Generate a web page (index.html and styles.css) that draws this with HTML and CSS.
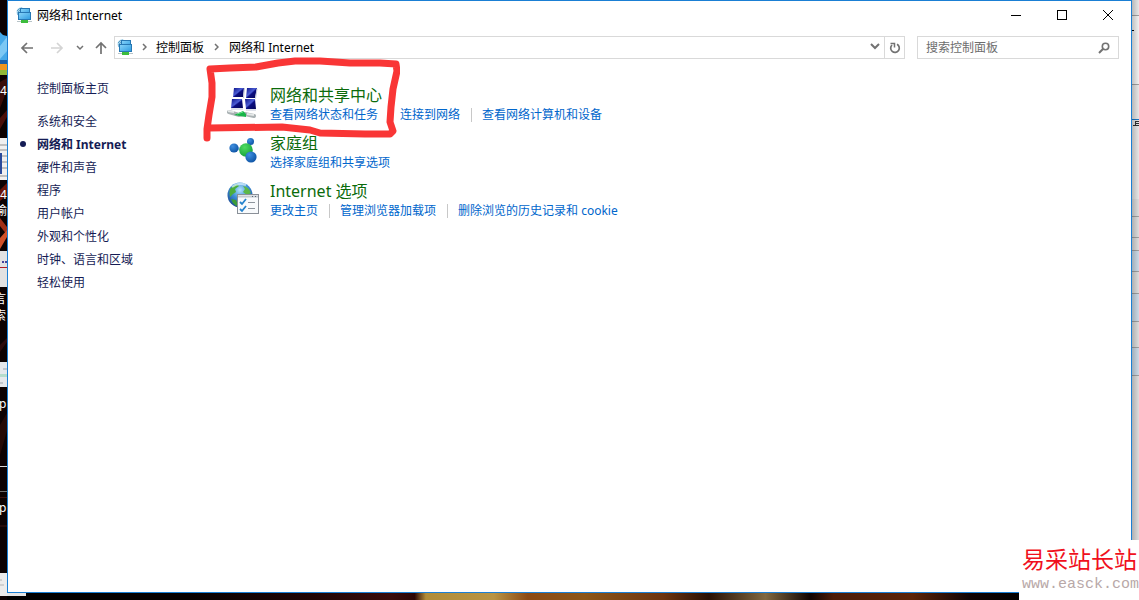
FILE: index.html
```html
<!DOCTYPE html>
<html lang="zh-CN">
<head>
    <meta charset="UTF-8">
    <meta name="viewport" content="width=device-width, initial-scale=1.0">
    <title>网络和 Internet</title>
    <link rel="stylesheet" href="styles.css">
</head>
<body>
    <svg width="0" height="0" class="defs" aria-hidden="true">
        <defs>
            <linearGradient id="screen" x1="0" y1="0" x2="1" y2="1">
                <stop offset="0" stop-color="#8bd6fa"/>
                <stop offset="1" stop-color="#2d9be0"/>
            </linearGradient>
            <linearGradient id="panel" x1="0" y1="0" x2="1" y2="1">
                <stop offset="0" stop-color="#0d1387"/>
                <stop offset="0.45" stop-color="#4a5cd4"/>
                <stop offset="0.55" stop-color="#0a0d80"/>
                <stop offset="1" stop-color="#040656"/>
            </linearGradient>
            <radialGradient id="blueBall" cx="0.35" cy="0.3" r="0.8">
                <stop offset="0" stop-color="#3f8fe0"/>
                <stop offset="1" stop-color="#0a4fa0"/>
            </radialGradient>
            <radialGradient id="greenBall" cx="0.4" cy="0.3" r="0.8">
                <stop offset="0" stop-color="#4fdc60"/>
                <stop offset="1" stop-color="#0f9c38"/>
            </radialGradient>
            <radialGradient id="globe" cx="0.5" cy="0.3" r="0.75">
                <stop offset="0" stop-color="#b4e4fb"/>
                <stop offset="0.45" stop-color="#3d8fd6"/>
                <stop offset="1" stop-color="#123a86"/>
            </radialGradient>
            <linearGradient id="shade" x1="0" y1="0" x2="1" y2="0">
                <stop offset="0" stop-color="#000" stop-opacity="0.2"/>
                <stop offset="1" stop-color="#000" stop-opacity="0"/>
            </linearGradient>
            <symbol id="net-icon" viewBox="0 0 16 16">
                <circle cx="5" cy="5" r="4.500" fill="#a9d8ef"/>
                <path d="M1 4q2-3 5-3M2 8q-1-3 2-5" fill="none" stroke="#5b9cc4"/>
                <rect x="4.500" y="1.500" width="9" height="7" fill="url(#screen)" stroke="#2778b4"/>
                <rect x="2.500" y="5.500" width="12" height="7" fill="url(#screen)" stroke="#2778b4"/>
                <path d="M1 14h15v1H1z" fill="#b8c4c8"/>
                <path d="M5 13h7v3H5z" fill="#3cbc3c"/>
            </symbol>
        </defs>
    </svg>

    <div class="desktop">
        <svg class="edge edge-left" viewBox="0 0 7 600" preserveAspectRatio="xMinYMin slice" aria-hidden="true">
            <rect width="7" height="600" fill="#0c0202"/>
            <path d="M0 32l3 3 4 1v25H0z" fill="#46a9e8"/>
            <path d="M0 46l7-9v14l-7 8z" fill="#7cc8f4"/>
            <rect y="60" width="7" height="4" fill="#1b5ea6"/>
            <rect y="64" width="7" height="6" fill="#f0951c"/>
            <rect y="70" width="7" height="5" fill="#8fb838"/>
            <path d="M0 82l7-4v12l-7 18z" fill="#3a0c08"/>
            <path d="M0 118l7-8v7l-7 12z" fill="#4a0f0a"/>
            <rect y="138" width="7" height="42" fill="#f0f0f0"/>
            <path d="M0 145h7M0 150h7M2 156h5M2 162h5M2 168h5M0 176h7" stroke="#8e8e8e"/>
            <rect y="153" width="2" height="21" fill="#2a4b9c"/>
            <path d="M0 190l7-7v12l-7 6z" fill="#6a1408"/>
            <path d="M0 218l7 9v8l-7-9z" fill="#a03018"/>
            <path d="M0 238l7-8v7l-7 12z" fill="#d05028"/>
            <rect y="251" width="7" height="36" fill="#e2e2e2"/>
            <path d="M2 262h2M5 262h2" stroke="#44449c" stroke-width="2"/>
            <path d="M0 267.500h7" stroke="#b01c24"/>
            <path d="M0 345l7-7v4l-7 10z" fill="#2c0a0a"/>
            <rect y="362" width="7" height="25" fill="#e4e8ec"/>
            <rect y="374" width="7" height="3" fill="#b4dccc"/>
            <path d="M3 369h4M0 383h3" stroke="#9aa4ac"/>
            <path d="M0 425l7-12v18l-7 24z" fill="#240a06"/>
            <path d="M0 466.500h7" stroke="#d8d8d8"/>
            <path d="M0 491.500h7" stroke="#707070"/>
            <path d="M0 497.500h7M0 526h7" stroke="#3c1410"/>
            <rect y="573" width="7" height="23" fill="#ececec"/>
            <path d="M0 580h2M0 585h4" stroke="#b4b4b4"/>
            <g class="edge-text">
                <text x="0" y="95">4</text>
                <text x="0" y="199">4</text>
                <text x="-5" y="215">瑜</text>
                <text x="-6" y="303">言</text>
                <text x="-6" y="320">索</text>
                <text x="-1" y="408">p</text>
                <text x="-1" y="512">p</text>
            </g>
        </svg>

        <div class="window">
            <header class="titlebar">
                <svg class="icon16"><use href="#net-icon"/></svg>
                <span class="title">网络和 Internet</span>
                <button type="button" class="caption-btn" aria-label="最小化">
                    <svg width="10" height="10"><path d="M0 5.500h10" stroke="#000"/></svg>
                </button>
                <button type="button" class="caption-btn" aria-label="最大化">
                    <svg width="10" height="10"><rect x="0.500" y="0.500" width="9" height="9" fill="none" stroke="#000"/></svg>
                </button>
                <button type="button" class="caption-btn" aria-label="关闭">
                    <svg width="10" height="10"><path d="M0 0l10 10M10 0L0 10" stroke="#000"/></svg>
                </button>
            </header>

            <div class="toolbar">
                <div class="nav-buttons">
                    <button type="button" aria-label="后退">
                        <svg width="14" height="14"><path d="M13 7H2M7 2L2 7l5 5" fill="none" stroke="#727272" stroke-width="1.700"/></svg>
                    </button>
                    <button type="button" aria-label="前进">
                        <svg width="14" height="14"><path d="M1 7h11M7 2l5 5-5 5" fill="none" stroke="#d4d4d4" stroke-width="1.700"/></svg>
                    </button>
                    <button type="button" class="small" aria-label="最近浏览的位置">
                        <svg width="8" height="6"><path d="M1 1l3 3 3-3" fill="none" stroke="#727272" stroke-width="1.500"/></svg>
                    </button>
                    <button type="button" aria-label="上移">
                        <svg width="14" height="14"><path d="M7 13V2M2 7l5-5 5 5" fill="none" stroke="#727272" stroke-width="1.700"/></svg>
                    </button>
                </div>
                <nav class="address" aria-label="地址">
                    <svg class="icon16"><use href="#net-icon"/></svg>
                    <svg class="chevron" width="5" height="8"><path d="M1 1l3 3-3 3" fill="none" stroke="#727272" stroke-width="1.500"/></svg>
                    <a href="#">控制面板</a>
                    <svg class="chevron" width="5" height="8"><path d="M1 1l3 3-3 3" fill="none" stroke="#727272" stroke-width="1.500"/></svg>
                    <a href="#">网络和 Internet</a>
                    <button type="button" class="drop" aria-label="以前的位置">
                        <svg width="10" height="7"><path d="M1 1l4 4 4-4" fill="none" stroke="#727272" stroke-width="2"/></svg>
                    </button>
                    <button type="button" class="refresh" aria-label="刷新">
                        <svg width="12" height="12"><path d="M3 3A4.300 4.300 0 1 0 8 2.300" fill="none" stroke="#727272" stroke-width="1.700"/><path d="M1.500 1.500H5.500V5.500" fill="none" stroke="#727272" stroke-width="1.500"/></svg>
                    </button>
                </nav>
                <form class="search">
                    <input type="search" placeholder="搜索控制面板" aria-label="搜索控制面板">
                    <button type="button" aria-label="搜索">
                        <svg width="12" height="12"><circle cx="7.500" cy="4.500" r="3.200" fill="none" stroke="#727272" stroke-width="1.600"/><path d="M5.200 6.800L1 11" stroke="#727272" stroke-width="2"/></svg>
                    </button>
                </form>
            </div>

            <div class="content">
                <aside class="sidebar">
                    <a class="home" href="#">控制面板主页</a>
                    <ul>
                        <li><a href="#">系统和安全</a></li>
                        <li class="current"><a href="#">网络和 Internet</a></li>
                        <li><a href="#">硬件和声音</a></li>
                        <li><a href="#">程序</a></li>
                        <li><a href="#">用户帐户</a></li>
                        <li><a href="#">外观和个性化</a></li>
                        <li><a href="#">时钟、语言和区域</a></li>
                        <li><a href="#">轻松使用</a></li>
                    </ul>
                </aside>

                <main class="categories">
                    <section class="category">
                        <svg class="icon32" viewBox="0 0 32 32" aria-hidden="true">
                            <g fill="url(#panel)">
                                <path d="M7 2h10l-1 9H6z"/>
                                <path d="M20 2h10l-2 10h-9z"/>
                                <path d="M5 13h10l1 9H4z"/>
                                <path d="M18 13h10l1 10H19z"/>
                            </g>
                            <path d="M17.500 2l-1 10M30 3l-1.500 9.500M4 23h12M19 24h10" stroke="#c0c6d8"/>
                            <path d="M2 26l10 3 6-1 9 2" fill="none" stroke="#aab2b4" stroke-width="4" stroke-linecap="round"/>
                            <path d="M1 25l6 1M20 28l7 1" stroke="#e4e8e8" stroke-width="2"/>
                            <path d="M7 29l9-4 3 3v3l-6-1z" fill="#19b548"/>
                            <path d="M10 28l6-2" stroke="#6be48a"/>
                        </svg>
                        <div class="category-text">
                            <h2><a href="#">网络和共享中心</a></h2>
                            <ul class="tasks">
                                <li><a href="#">查看网络状态和任务</a></li>
                                <li><a href="#">连接到网络</a></li>
                                <li><a href="#">查看网络计算机和设备</a></li>
                            </ul>
                        </div>
                    </section>

                    <section class="category">
                        <svg class="icon32" viewBox="0 0 32 32" aria-hidden="true">
                            <path d="M7 14l12 2M23 8l-3 7M24 22l-4-5" stroke="#9cc8dc" stroke-width="3"/>
                            <circle cx="23.500" cy="7.500" r="3.500" fill="url(#blueBall)"/>
                            <circle cx="7" cy="14" r="4.600" fill="url(#blueBall)"/>
                            <circle cx="19" cy="16" r="6.800" fill="url(#greenBall)"/>
                            <circle cx="24" cy="23" r="5.600" fill="url(#blueBall)"/>
                        </svg>
                        <div class="category-text">
                            <h2><a href="#">家庭组</a></h2>
                            <ul class="tasks">
                                <li><a href="#">选择家庭组和共享选项</a></li>
                            </ul>
                        </div>
                    </section>

                    <section class="category">
                        <svg class="icon32" viewBox="0 0 32 32" aria-hidden="true">
                            <circle cx="13" cy="13" r="12.500" fill="url(#globe)"/>
                            <path d="M3 7q3-4 7-5l2 2-4 3 1 3-3 2-3 3q-1-4 0-8z" fill="#4cae3c"/>
                            <path d="M16 4q6 1 8 7l-4 2-4-3 2-3z" fill="#5cb848"/>
                            <path d="M4 17l5 1 2 5-2 1q-4-3-5-7z" fill="#3c9c38"/>
                            <path d="M5 5q6-5 14-2" fill="none" stroke="#e2f6ff" stroke-width="2" opacity="0.700"/>
                            <rect x="10.500" y="12.500" width="21" height="19" fill="#f8fafc" stroke="#8a9098"/>
                            <path d="M11 14.500h20" stroke="#c4cad0" stroke-width="2"/>
                            <path d="M25 14.500h1M28 14.500h1" stroke="#5c6872"/>
                            <path d="M13 20l2 2 4-5M13 27l2 2 4-5" fill="none" stroke="#2482cc" stroke-width="1.800"/>
                            <path d="M21 20.500h7M21 26.500h7" stroke="#8c949c"/>
                        </svg>
                        <div class="category-text">
                            <h2><a href="#">Internet 选项</a></h2>
                            <ul class="tasks">
                                <li><a href="#">更改主页</a></li>
                                <li><a href="#">管理浏览器加载项</a></li>
                                <li><a href="#">删除浏览的历史记录和 cookie</a></li>
                            </ul>
                        </div>
                    </section>

                    <!-- hand drawn marker around the first category -->
                    <svg class="marker" viewBox="0 0 200 90" aria-hidden="true">
                        <path d="M7 81L7 72L9 58L12 40L12 26L10 12L30 11L56 10L78 6L95 4L120 4L150 6L180 6L196 7L197 14L193 32L191 50L190 65L193 74L190 77L165 77L120 76L110 73L82 70L9 71"/>
                    </svg>
                </main>
            </div>
        </div>

        <svg class="edge edge-right" viewBox="0 0 7 600" preserveAspectRatio="xMinYMin slice" aria-hidden="true">
            <rect width="7" height="600" fill="#e6e6e6"/>
            <rect y="16" width="7" height="68" fill="#f0f0f0"/>
            <rect y="199" width="7" height="401" fill="#dcdcdc"/>
            <rect y="250" width="7" height="21" fill="#cbd9e6"/>
            <rect y="293" width="7" height="28" fill="#cbd9e6"/>
            <rect y="347" width="7" height="28" fill="#cbd9e6"/>
            <path d="M0 15.500h7M0 84.500h7M0 216.500h7M0 237.500h7M0 250.500h7M0 271.500h7M0 293.500h7M0 321.500h7M0 347.500h7M0 375.500h7" stroke="#a0a0a0"/>
            <path d="M0 30.500h2" stroke="#000"/>
            <path d="M0 119.500h7" stroke="#1a78c8"/>
            <path d="M3 121.500h4M3 123.500h4M1 125.500h6M3.500 121v4" stroke="#303030"/>
            <rect width="7" height="600" fill="url(#shade)"/>
        </svg>
        <div class="edge-bottom"></div>
    </div>

    <div class="watermark">
        <strong>易采站长站</strong>
        <span>www.easck.com</span>
    </div>
</body>
</html>
```

FILE: styles.css
```css
* {
    box-sizing: border-box;
}
body {
    margin: 0;
    font-family: "Noto Sans", "Noto Sans CJK SC", sans-serif;
    font-size: 12px;
    color: #000;
}
a {
    color: inherit;
    text-decoration: none;
}
ul {
    list-style: none;
    margin: 0;
    padding: 0;
}
button {
    display: flex;
    align-items: center;
    justify-content: center;
    flex: none;
    padding: 0;
    border: none;
    background: none;
}
svg {
    display: block;
    flex: none;
}
.defs {
    position: absolute;
}

/* desktop behind the window */
.desktop {
    display: grid;
    grid-template-columns: 7px 1fr 7px;
    grid-template-rows: 1fr 7px;
    min-height: 100vh;
    background: #000;
}
.edge {
    width: 7px;
    height: 100%;
    overflow: hidden;
    grid-row: 1 / 3;
}
.edge-left {
    grid-column: 1;
}
.edge-right {
    grid-column: 3;
}
.edge-text {
    font-size: 12px;
    fill: #fff;
}
.edge-bottom {
    grid-column: 2 / 4;
    grid-row: 2;
    background:
        linear-gradient(#e4e4e4, #e4e4e4) 0 0 / 19px 3px no-repeat,
        linear-gradient(90deg, #000 0%, #060000 16%, #200505 27%, #3a0c0c 34%, #2c0606 36%, #b08c38 37%, #b89444 43%, #8c4a14 46%, #8c5618 51%, #6c3410 58%, #281004 62%, #806840 67%, #100402 71%, #4c1c08 73%, #5c2408 80%, #100404 85%, #000 90%);
}

/* window */
.window {
    grid-column: 2;
    grid-row: 1;
    display: flex;
    flex-direction: column;
    min-width: 0;
    background: #fff;
    border: 1px solid #1a7fd4;
}
.icon16 {
    width: 16px;
    height: 16px;
}
.titlebar {
    display: flex;
    align-items: center;
    height: 28px;
    padding-left: 8px;
}
.title {
    flex: 1;
    margin-left: 5px;
}
.caption-btn {
    width: 46px;
    height: 28px;
}
.toolbar {
    display: flex;
    padding: 7px 12px 0 8px;
}
.nav-buttons {
    display: flex;
    align-items: center;
    width: 98px;
}
.nav-buttons button {
    width: 22px;
    height: 22px;
    margin-right: 8px;
}
.nav-buttons .small {
    width: 8px;
    margin-right: 6px;
}
.address {
    flex: 1;
    display: flex;
    align-items: center;
    height: 23px;
    padding: 0 0 2px 2px;
    border: 1px solid #d9d9d9;
}
.address .chevron {
    margin: 0 9px;
}
.address .chevron + a + .chevron {
    margin: 0 10px;
}
.drop {
    width: 18px;
    height: 21px;
    margin-left: auto;
}
.refresh {
    align-self: flex-start;
    width: 20px;
    height: 21px;
    border-left: 1px solid #d9d9d9;
}
.search {
    display: flex;
    width: 202px;
    height: 23px;
    margin-left: 12px;
    border: 1px solid #d9d9d9;
}
.search input {
    flex: 1;
    min-width: 0;
    padding: 0 0 0 8px;
    border: none;
    outline: none;
    background: none;
    font: inherit;
}
.search input::placeholder {
    color: #6d6d6d;
}
.search button {
    width: 28px;
}

/* content */
.content {
    flex: 1;
    display: flex;
}
.sidebar {
    width: 219px;
    padding: 18px 0 0 29px;
    line-height: 23px;
    color: #151c55;
}
.home {
    display: block;
    margin-bottom: 10px;
}
.current {
    position: relative;
    font-weight: bold;
}
.current::before {
    content: "";
    position: absolute;
    left: -17px;
    top: 8px;
    width: 6px;
    height: 6px;
    border-radius: 50%;
    background: #151c55;
}
.categories {
    position: relative;
    flex: 1;
    padding-top: 26px;
}
.category {
    display: flex;
    align-items: flex-start;
    gap: 11px;
    margin-bottom: 8px;
}
.icon32 {
    width: 32px;
    height: 32px;
}
.category h2 {
    margin: 0;
    font-size: 16px;
    font-weight: normal;
    line-height: 20px;
    color: #0b6b0b;
}
.tasks {
    display: flex;
    align-items: center;
    line-height: 20px;
    color: #0066cc;
}
.tasks li {
    display: flex;
    align-items: center;
}
.tasks li + li::before {
    content: "";
    width: 1px;
    height: 14px;
    margin: 0 10px 0 11px;
    background: #c8c8c8;
}
.marker {
    position: absolute;
    left: -27px;
    top: -2px;
    width: 200px;
    height: 90px;
    pointer-events: none;
}
.marker path {
    fill: none;
    stroke: #f93636;
    stroke-width: 7px;
    stroke-linecap: round;
    stroke-linejoin: round;
}
.category .icon32 {
    margin-top: 1px;
}

.watermark {
    position: absolute;
    right: 0;
    bottom: 0;
    width: 120px;
    height: 60px;
    padding: 4px 0 0 3px;
    background: #fff;
    white-space: nowrap;
    overflow: hidden;
}
.watermark strong {
    display: block;
    font-size: 23px;
    font-weight: 400;
    line-height: 30px;
    color: #f01020;
}
.watermark span {
    display: block;
    font-family: "Liberation Mono", monospace;
    font-size: 15px;
    line-height: 22px;
    color: #b8a8a8;
}
```
